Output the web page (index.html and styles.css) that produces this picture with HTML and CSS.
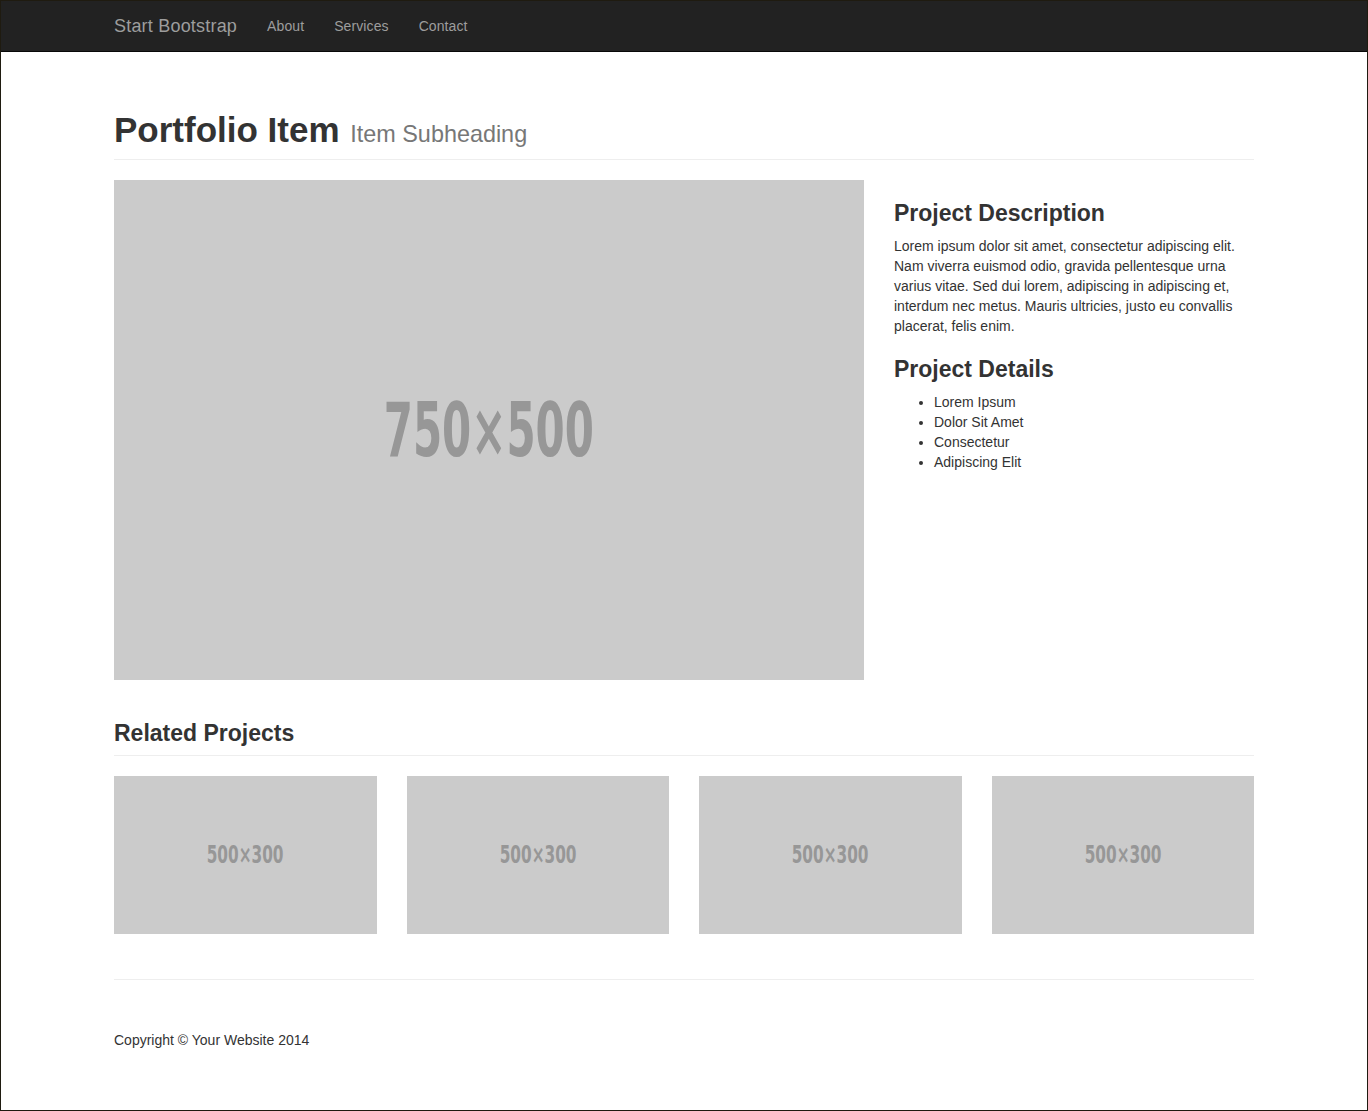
FILE: index.html
```html
<!DOCTYPE html>
<html lang="en">
<head>
<meta charset="utf-8">
<title>Portfolio Item</title>
<link rel="stylesheet" href="styles.css">
</head>
<body>
<nav class="navbar">
  <div class="container nav-inner">
    <a class="brand" href="#">Start Bootstrap</a>
    <ul class="nav-links">
      <li><a href="#">About</a></li>
      <li><a href="#">Services</a></li>
      <li><a href="#">Contact</a></li>
    </ul>
  </div>
</nav>

<main class="container">
  <h1 class="page-header title">Portfolio Item <small>Item Subheading</small></h1>

  <div class="item-row">
    <div class="placeholder big"><span>750×500</span></div>
    <div class="details">
      <h3>Project Description</h3>
      <p>Lorem ipsum dolor sit amet, consectetur adipiscing elit. Nam viverra euismod odio, gravida pellentesque urna varius vitae. Sed dui lorem, adipiscing in adipiscing et, interdum nec metus. Mauris ultricies, justo eu convallis placerat, felis enim.</p>
      <h3>Project Details</h3>
      <ul>
        <li>Lorem Ipsum</li>
        <li>Dolor Sit Amet</li>
        <li>Consectetur</li>
        <li>Adipiscing Elit</li>
      </ul>
    </div>
  </div>

  <h3 class="page-header related">Related Projects</h3>

  <div class="thumbs">
    <a class="placeholder small-ph" href="#"><span>500×300</span></a>
    <a class="placeholder small-ph" href="#"><span>500×300</span></a>
    <a class="placeholder small-ph" href="#"><span>500×300</span></a>
    <a class="placeholder small-ph" href="#"><span>500×300</span></a>
  </div>

  <hr class="rule">

  <footer class="footer">
    <p>Copyright © Your Website 2014</p>
  </footer>
</main>
</body>
</html>
```

FILE: styles.css
```css
* { box-sizing: border-box; }

html, body { margin: 0; padding: 0; }

body {
  min-height: 100vh;
  border: 1px solid #1f1b10;
  background: #fff;
  color: #333;
  font-family: "Liberation Sans", Arial, sans-serif;
  font-size: 14px;
  line-height: 20px;
}

.container {
  width: 1170px;
  margin: 0 auto;
  padding: 0 15px;
}

/* navbar */
.navbar {
  background: #222;
  border-bottom: 1px solid #080808;
  height: 51px;
}
.nav-inner {
  display: flex;
  align-items: center;
  height: 50px;
}
.brand {
  color: #9d9d9d;
  text-decoration: none;
  font-size: 18px;
  line-height: 20px;
  letter-spacing: 0.2px;
  padding: 15px;
  margin-left: -15px;
}
.nav-links {
  display: flex;
  list-style: none;
  margin: 0;
  padding: 0;
}
.nav-links a {
  display: block;
  color: #9d9d9d;
  text-decoration: none;
  font-size: 14px;
  line-height: 20px;
  letter-spacing: 0.1px;
  padding: 15px;
}

/* headings */
h1, h3 {
  font-weight: 700;
  color: #333;
}
.page-header {
  padding-bottom: 9px;
  border-bottom: 1px solid #eee;
  margin: 40px 0 20px;
}
.title {
  font-size: 35px;
  line-height: 39.6px;
  margin-top: 58px;
}
.title small {
  font-size: 23.4px;
  line-height: 1;
  color: #777;
  font-weight: normal;
  margin-left: 1px;
}

/* main item */
.item-row {
  display: flex;
  gap: 30px;
}
.placeholder {
  background: #cbcbcb;
  display: flex;
  align-items: center;
  justify-content: center;
  text-decoration: none;
  color: #979797;
  font-family: "DejaVu Sans Condensed", "DejaVu Sans", sans-serif;
  font-weight: 700;
}
.placeholder span {
  display: inline-block;
  line-height: 1;
}
.big {
  width: 750px;
  height: 500px;
  flex: none;
}
.big span {
  font-size: 74px;
  transform: scaleX(0.63);
}
.details {
  flex: 1;
}
.details h3 {
  font-size: 23px;
  line-height: 26.4px;
  margin: 20px 0 10px;
}
.details p {
  margin: 0 0 10px;
}
.details ul {
  margin: 0 0 10px;
  padding-left: 40px;
}

.related {
  font-size: 23px;
  line-height: 26.4px;
}

/* thumbnails */
.thumbs {
  display: grid;
  grid-template-columns: repeat(4, 1fr);
  gap: 30px;
}
.small-ph {
  height: 157.5px;
}
.small-ph span {
  font-size: 24px;
  transform: scaleX(0.71);
}

.rule {
  border: 0;
  border-top: 1px solid #eee;
  margin: 45px 0 0;
  height: 0;
}

.footer {
  padding-top: 50px;
}
.footer p {
  margin: 0 0 10px;
}
```
